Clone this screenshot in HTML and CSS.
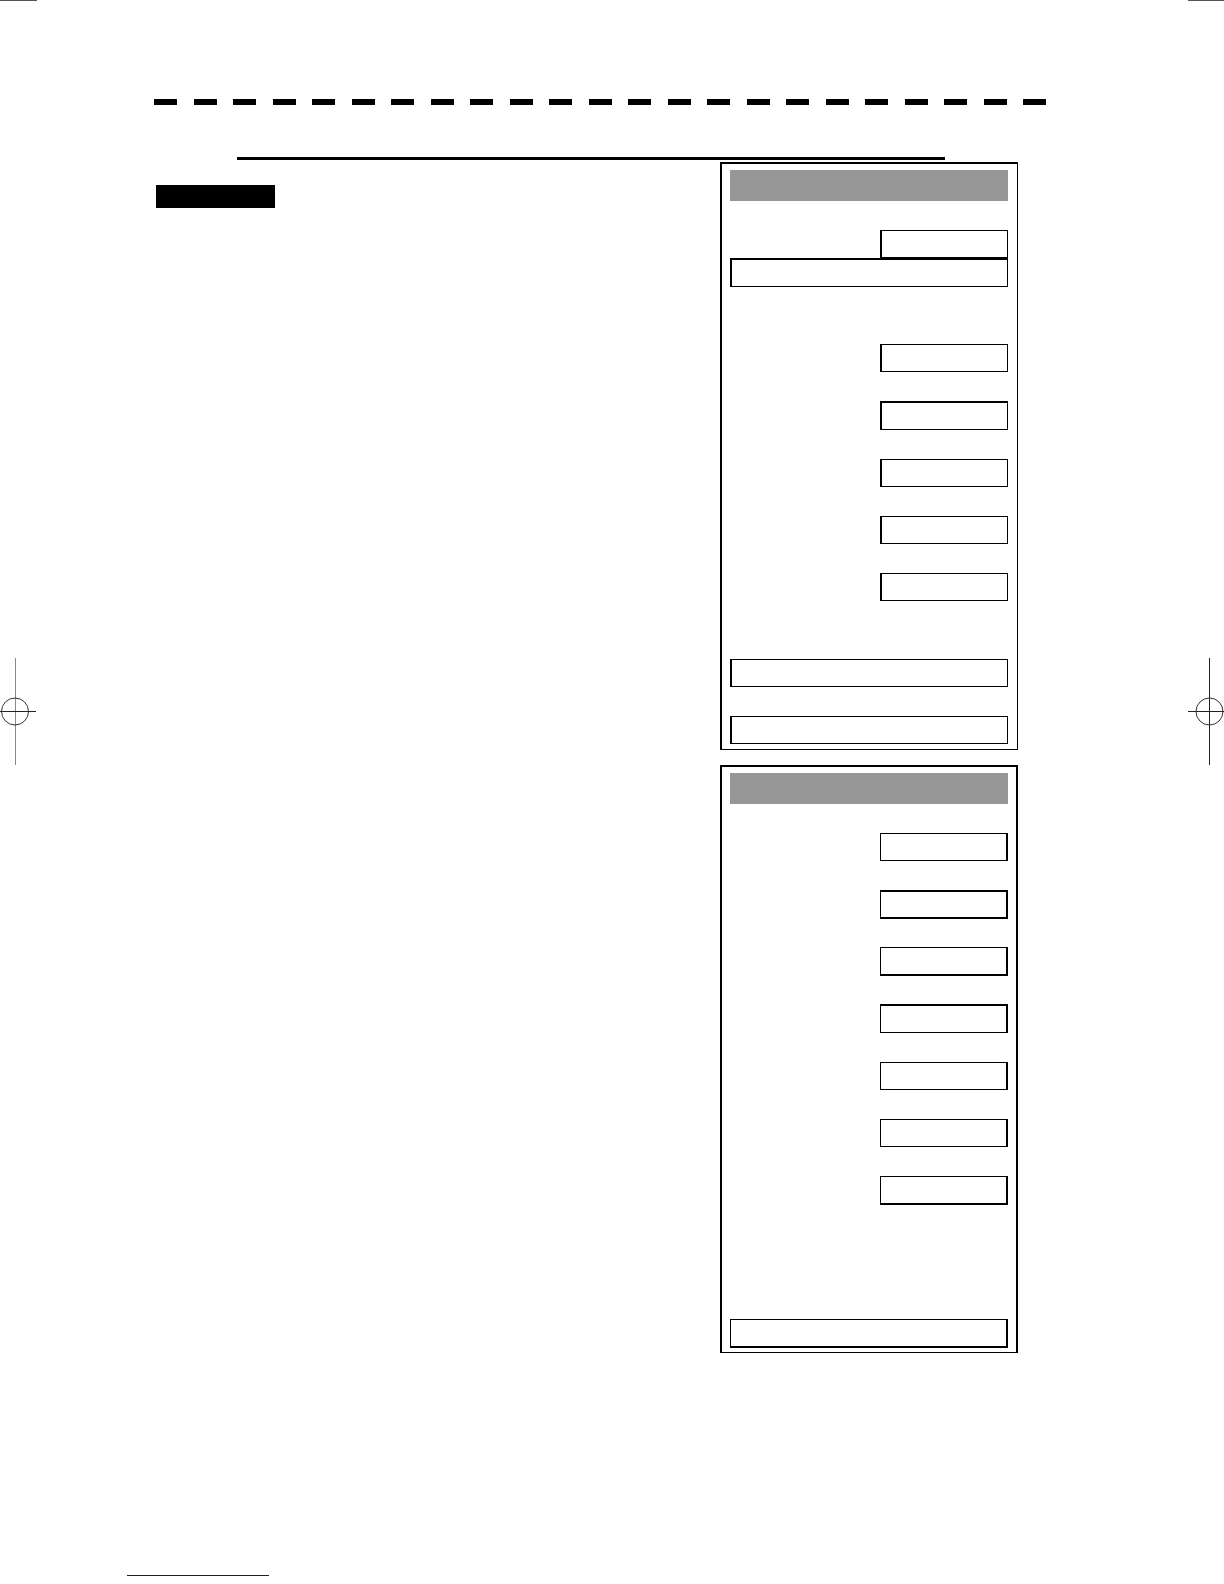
FILE: index.html
```html
<!DOCTYPE html>
<html lang="en">
<head>
  <meta charset="UTF-8">
  <meta name="viewport" content="width=device-width, initial-scale=1.0">
  <title>Menu settings</title>
  <link rel="stylesheet" href="styles.css">
</head>
<body>
  <div class="page">
    <div class="marks left">
      <svg class="register" width="37" height="107" viewBox="0 0 37 107" fill="none">
        <path d="M15.5 0V107" stroke="#888"/>
        <path d="M0 53.5H36" stroke="#222"/>
        <circle cx="15" cy="53.5" r="13.5" stroke="#333"/>
      </svg>
    </div>

    <main class="sheet">
      <div class="content">
        <div class="dashes">
          <span></span><span></span><span></span><span></span><span></span><span></span>
          <span></span><span></span><span></span><span></span><span></span><span></span>
          <span></span><span></span><span></span><span></span><span></span><span></span>
          <span></span><span></span><span></span><span></span><span></span>
        </div>
        <hr class="rule">
        <div class="columns">
          <div class="tag"></div>
          <div class="panels">
            <section class="panel first">
              <div class="panel-header"></div>
              <div class="group">
                <div class="field"></div>
                <div class="field wide joined thick-top"></div>
              </div>
              <div class="group values">
                <div class="field"></div>
                <div class="field thick-top"></div>
                <div class="field"></div>
                <div class="field"></div>
                <div class="field"></div>
              </div>
              <div class="group actions">
                <div class="field wide"></div>
                <div class="field wide"></div>
              </div>
            </section>
            <section class="panel second">
              <div class="panel-header"></div>
              <div class="group">
                <div class="field"></div>
                <div class="field thick-top thick-bottom"></div>
                <div class="field thick-bottom"></div>
                <div class="field thick-top"></div>
                <div class="field"></div>
                <div class="field"></div>
                <div class="field thick-bottom"></div>
              </div>
              <div class="group actions">
                <div class="field wide thick-bottom"></div>
              </div>
            </section>
          </div>
        </div>
      </div>
      <footer class="footer">
        <a class="footer-link" href="#" aria-label="Home"></a>
      </footer>
    </main>

    <div class="marks right">
      <svg class="register" width="36" height="107" viewBox="0 0 36 107" fill="none">
        <path d="M21.5 0V107" stroke="#222"/>
        <path d="M0 53.5H36" stroke="#222"/>
        <circle cx="21.5" cy="53.5" r="13.5" stroke="#333"/>
      </svg>
    </div>
  </div>
</body>
</html>
```
FILE: styles.css
```css
* {
  box-sizing: border-box;
}
body {
  margin: 0;
  background: #fff;
  font-family: "Liberation Sans", Arial, sans-serif;
}
.page {
  display: grid;
  grid-template-columns: 37px 1fr 36px;
  min-height: 100vh;
}

/* print marks on both edges */
.marks {
  border-top: 1px solid #555;
}
.register {
  display: block;
  margin-top: 657px;
}

.sheet {
  display: flex;
  flex-direction: column;
  justify-content: space-between;
}
.content {
  padding: 99px 142px 0 117px;
}
.dashes {
  display: flex;
  justify-content: space-between;
}
.dashes span {
  width: 23px;
  height: 6px;
  background: #000;
}
.rule {
  height: 3px;
  margin: 52px 101px 2px 83px;
  border: 0;
  background: #000;
}
.columns {
  display: flex;
  justify-content: space-between;
  align-items: flex-start;
  padding: 0 28px 0 2px;
}
.tag {
  width: 119px;
  height: 23px;
  margin-top: 23px;
  background: #000;
}

/* menu panels */
.panels {
  display: flex;
  flex-direction: column;
  gap: 15px;
  width: 298px;
}
.panel {
  border: 2px solid #000;
  border-bottom-width: 1px;
}
.panel.first {
  padding: 6px 9px 5px 8px;
  border-right-width: 1px;
}
.panel.second {
  padding: 6px 8px 5px;
}
.panel-header {
  height: 31px;
  background: #969696;
}
.group {
  display: flex;
  flex-direction: column;
  align-items: flex-end;
  gap: 29px;
  margin-top: 29px;
}
.first .values {
  margin-top: 57px;
}
.first .actions {
  margin-top: 58px;
}
.second .actions {
  margin-top: 115px;
}
.field {
  width: 128px;
  height: 28px;
  border: 1px solid #000;
}
.first .field {
  border-left-width: 2px;
}
.second .field {
  border-right-width: 2px;
}
.field.wide {
  width: 100%;
}
.field.joined {
  margin-top: -29px;
}
.field.thick-top {
  height: 29px;
  border-top-width: 2px;
}
.field.thick-bottom {
  height: 29px;
  margin-bottom: -1px;
  border-bottom-width: 2px;
}

.footer {
  padding: 0 90px 8px;
}
.footer-link {
  display: block;
  width: 142px;
  border-bottom: 1px solid #14148c;
}
```
